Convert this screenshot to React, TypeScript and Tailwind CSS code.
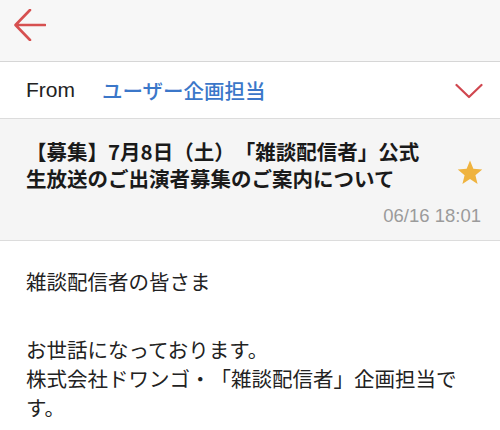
const jp = "font-['Noto_Sans_CJK_JP',sans-serif] [text-spacing-trim:space-all]";

const BackArrow = () => (
  <svg width="32" height="32" viewBox="0 0 32 32" fill="none">
    <path
      d="M31 16H2M16 1L1.5 16L16 31"
      stroke="#d65050"
      strokeWidth="2.6"
      strokeLinecap="round"
      strokeLinejoin="round"
    />
  </svg>
);

const ChevronDown = () => (
  <svg width="28" height="16" viewBox="0 0 28 16" fill="none">
    <path
      d="M1.5 2L14 14L26.5 2"
      stroke="#d0474f"
      strokeWidth="2.2"
      strokeLinecap="round"
      strokeLinejoin="round"
    />
  </svg>
);

const Star = () => (
  <svg width="26" height="25" viewBox="0 0 24 23">
    <path
      d="M12 0.5L15.1 8.1L23.3 8.7L17 14L19 22L12 17.6L5 22L7 14L0.7 8.7L8.9 8.1Z"
      fill="#efb33f"
    />
  </svg>
);

export default function App() {
  return (
    <div className="w-[500px] h-[430px] overflow-hidden bg-white text-[#1f1f1f]">
      {/* top bar */}
      <div className="h-[62px] bg-[#f7f7f7] border-b border-[#d6d6d6] flex items-start pl-[14px] pt-[9px]">
        <BackArrow />
      </div>

      {/* from row */}
      <div className="h-[57px] border-b border-[#dcdcdc] flex items-center pl-[26px] pr-[17px]">
        <span className="font-['Liberation_Sans',sans-serif] text-[21px] text-[#222]">From</span>
        <span className={`${jp} ml-[27px] text-[20.5px] font-medium text-[#3b77c9]`}>
          ユーザー企画担当
        </span>
        <div className="ml-auto pt-[2px]">
          <ChevronDown />
        </div>
      </div>

      {/* subject */}
      <div className="h-[122px] bg-[#f5f5f5] border-b border-[#dcdcdc] pl-[26px] pr-[17px] pt-[19px] flex flex-col">
        <div className="flex">
          <h1 className={`${jp} flex-1 text-[20.5px] leading-[26.5px] font-bold text-[#1a1a1a]`}>
            【募集】7月8日（土）「雑談配信者」公式
            <br />
            生放送のご出演者募集のご案内について
          </h1>
          <div className="mt-[22px]">
            <Star />
          </div>
        </div>
        <div className="mt-[14px] text-right font-['Liberation_Sans',sans-serif] text-[18.5px] leading-[21px] text-[#9b9b9b] pr-[2px]">
          06/16 18:01
        </div>
      </div>

      {/* body */}
      <div className={`${jp} px-[26px] pt-[26px] text-[20.5px] leading-[29px] text-[#222]`}>
        <p>雑談配信者の皆さま</p>
        <p className="mt-[39px]">
          お世話になっております。
          <br />
          株式会社ドワンゴ・「雑談配信者」企画担当です。
        </p>
      </div>
    </div>
  );
}
